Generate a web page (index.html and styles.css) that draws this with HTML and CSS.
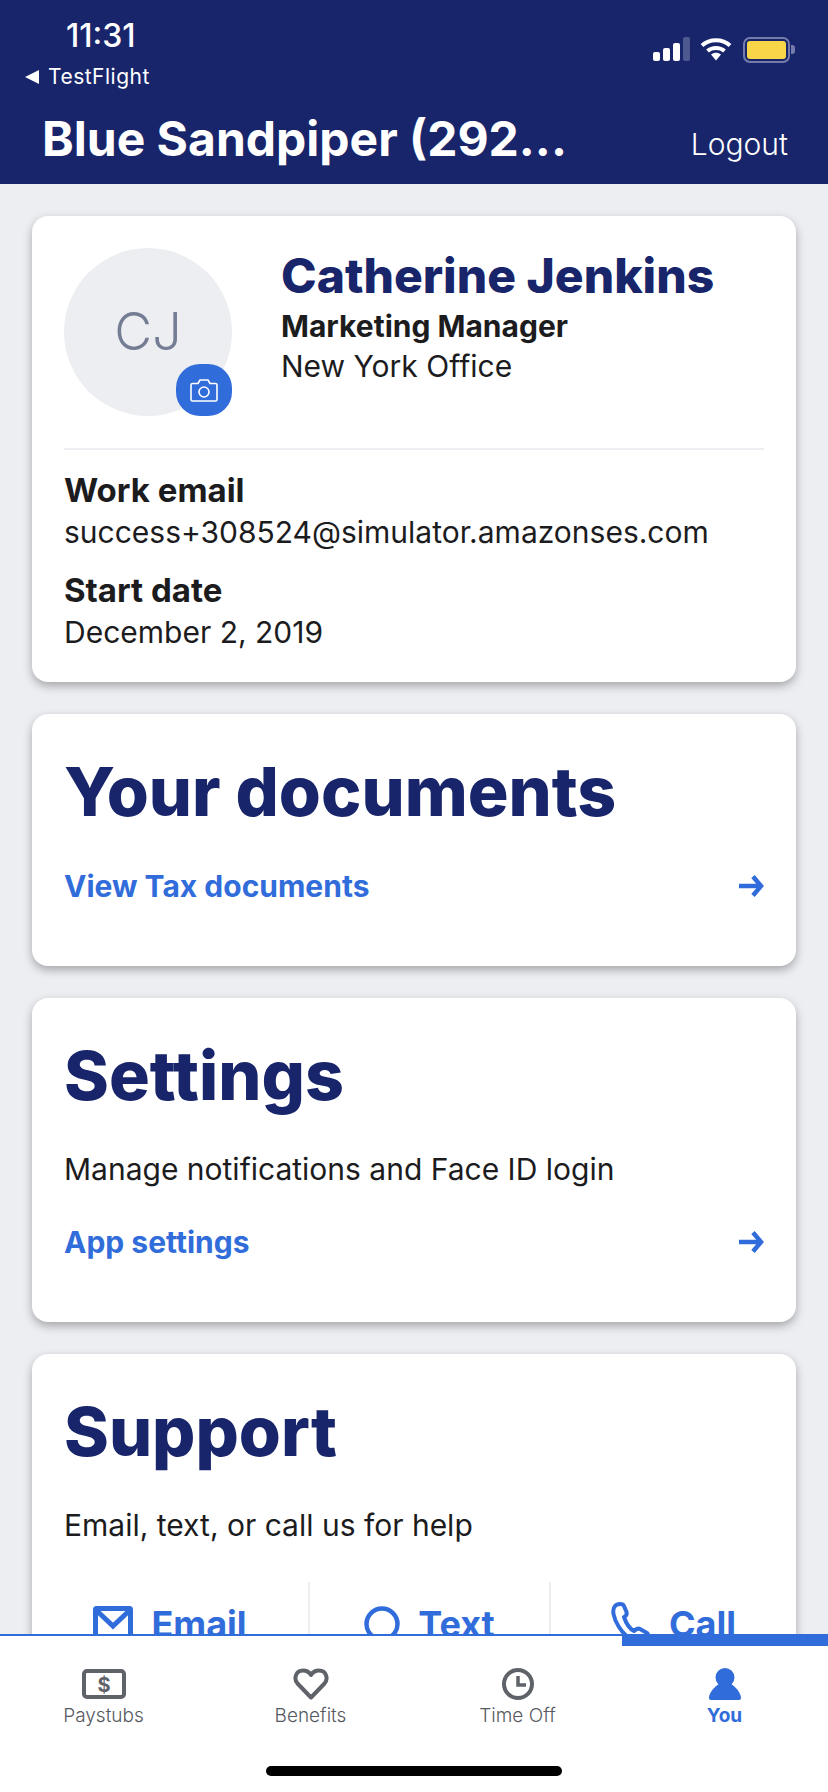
FILE: index.html
```html
<!DOCTYPE html>
<html lang="en">
<head>
    <meta charset="UTF-8">
    <meta name="viewport" content="width=device-width, initial-scale=1.0">
    <title>Blue Sandpiper</title>
    <link rel="stylesheet" href="styles.css">
</head>
<body>
    <div class="screen">
        <!-- Status bar and title -->
        <div class="header">
            <div class="status-row">
                <div class="status-left">
                    <div class="time">11:31</div>
                    <div class="back-app"><span class="back-arrow"></span>TestFlight</div>
                </div>
                <div class="status-icons">
                    <div class="signal">
                        <span class="bar bar-1"></span>
                        <span class="bar bar-2"></span>
                        <span class="bar bar-3"></span>
                        <span class="bar bar-4"></span>
                    </div>
                    <svg class="wifi" width="32" height="24" viewBox="0 0 32 24" fill="none" stroke="#fff" stroke-width="4">
                        <path d="M2 8.500C9.500 1.500 22.500 1.500 30 8.500"/>
                        <path d="M7.500 14C12 10 20 10 24.500 14"/>
                        <path d="M11 17.500L16 23.500L21 17.500C18 15 14 15 11 17.500Z" fill="#fff" stroke="none"/>
                    </svg>
                    <div class="battery"><div class="battery-fill"></div></div>
                    <div class="battery-nub"></div>
                </div>
            </div>
            <div class="title-row">
                <h1>Blue Sandpiper (292...</h1>
                <span class="logout">Logout</span>
            </div>
        </div>

        <div class="content">
            <!-- Profile -->
            <div class="card profile-card">
                <div class="profile-top">
                    <div class="avatar">
                        CJ
                        <div class="camera-badge">
                            <svg width="28" height="24" viewBox="0 0 28 24" fill="none" stroke="#fff" stroke-width="1.600" stroke-linejoin="round">
                                <path d="M2.500 5.500H8L10 2H18L20 5.500H25.500C26.300 5.500 27 6.200 27 7V21.500C27 22.300 26.300 23 25.500 23H2.500C1.700 23 1 22.300 1 21.500V7C1 6.200 1.700 5.500 2.500 5.500Z"/>
                                <circle cx="14" cy="14" r="5"/>
                            </svg>
                        </div>
                    </div>
                    <div class="profile-info">
                        <div class="profile-name">Catherine Jenkins</div>
                        <div class="profile-role">Marketing Manager</div>
                        <div class="profile-office">New York Office</div>
                    </div>
                </div>
                <div class="profile-details">
                    <div class="detail-label">Work email</div>
                    <div class="detail-value">success+308524@simulator.amazonses.com</div>
                    <div class="detail-label detail-gap">Start date</div>
                    <div class="detail-value">December 2, 2019</div>
                </div>
            </div>

            <!-- Documents -->
            <div class="card documents-card">
                <h2>Your documents</h2>
                <div class="link-row">
                    <span>View Tax documents</span>
                    <svg width="26" height="22" viewBox="0 0 26 22" fill="none" stroke="#316cdb" stroke-width="4.500">
                        <path d="M1 11H23"/>
                        <path d="M15 1.500L23 11L15 20.500"/>
                    </svg>
                </div>
            </div>

            <!-- Settings -->
            <div class="card settings-card">
                <h2>Settings</h2>
                <p class="card-text">Manage notifications and Face ID login</p>
                <div class="link-row">
                    <span>App settings</span>
                    <svg width="26" height="22" viewBox="0 0 26 22" fill="none" stroke="#316cdb" stroke-width="4.500">
                        <path d="M1 11H23"/>
                        <path d="M15 1.500L23 11L15 20.500"/>
                    </svg>
                </div>
            </div>

            <!-- Support -->
            <div class="card support-card">
                <h2>Support</h2>
                <p class="card-text">Email, text, or call us for help</p>
                <div class="contact-row">
                    <div class="contact">
                        <svg width="40" height="36" viewBox="0 0 40 36" fill="none" stroke="#316cdb" stroke-width="5">
                            <rect x="2.500" y="2.500" width="35" height="31" rx="1"/>
                            <path d="M3 4L20 20L37 4"/>
                        </svg>
                        Email
                    </div>
                    <div class="contact">
                        <svg width="36" height="44" viewBox="0 0 36 44" fill="none" stroke="#316cdb" stroke-width="4.500">
                            <circle cx="18" cy="22" r="15.500"/>
                        </svg>
                        Text
                    </div>
                    <div class="contact">
                        <svg width="40" height="44" viewBox="0 0 40 44" fill="none" stroke="#316cdb" stroke-width="4" stroke-linejoin="round">
                            <path d="M9 2C4 2 1.500 6 2.500 12C4 20 10 30 18 36C22 39 30 40 36 39C38 37 38 33 36 31L29 27C27 26 25 27 23 29C19 27 15 21 13 15C15 14 16 12 15.500 10L13 4C12.500 2.500 11 2 9 2Z"/>
                        </svg>
                        Call
                    </div>
                </div>
            </div>
        </div>

        <!-- Bottom navigation -->
        <div class="tabbar">
            <div class="tabs">
                <div class="tab">
                    <svg width="44" height="32" viewBox="0 0 44 32" fill="none" stroke="#5f6268" stroke-width="4">
                        <rect x="2" y="3" width="40" height="26" rx="3"/>
                        <text x="22" y="23.500" text-anchor="middle" class="dollar">$</text>
                    </svg>
                    <span>Paystubs</span>
                </div>
                <div class="tab">
                    <svg width="36" height="32" viewBox="0 0 36 32" fill="none" stroke="#5f6268" stroke-width="4" stroke-linejoin="round">
                        <path d="M18 29.500L4.500 15.500C0.500 11 2.500 2.500 10 2.500C13.500 2.500 16.500 4.500 18 7C19.500 4.500 22.500 2.500 26 2.500C33.500 2.500 35.500 11 31.500 15.500Z"/>
                    </svg>
                    <span>Benefits</span>
                </div>
                <div class="tab">
                    <svg width="32" height="32" viewBox="0 0 32 32" fill="none" stroke="#5f6268" stroke-width="4">
                        <circle cx="16" cy="16" r="14"/>
                        <path d="M16 8V17H24" stroke-width="3.500"/>
                    </svg>
                    <span>Time Off</span>
                </div>
                <div class="tab active">
                    <svg width="32" height="32" viewBox="0 0 32 32" fill="#316cdb">
                        <circle cx="16" cy="9.500" r="9.500"/>
                        <path d="M10 16C5 19 0 25 0 30C0 31.200 0.800 32 2 32H30C31.200 32 32 31.200 32 30C32 25 27 19 22 16C18 19 14 19 10 16Z"/>
                    </svg>
                    <span>You</span>
                </div>
            </div>
            <div class="home-indicator"></div>
        </div>
    </div>
</body>
</html>
```

FILE: styles.css
```css
* {
    margin: 0;
    padding: 0;
    box-sizing: border-box;
}

body {
    font-family: 'Inter', 'Liberation Sans', sans-serif;
    background: #edeef2;
    color: #1c1c1e;
}

.screen {
    width: 828px;
    height: 1792px;
    display: flex;
    flex-direction: column;
    overflow: hidden;
}

/* Header */
.header {
    height: 184px;
    flex-shrink: 0;
    background: #18256b;
    color: white;
    padding: 0 38px 0 25px;
}

.status-row {
    display: flex;
    justify-content: space-between;
    height: 100px;
}

.status-left {
    padding-top: 18px;
}

.time {
    font-size: 32px;
    font-weight: 500;
    line-height: 36px;
    margin-left: 41px;
}

.back-app {
    display: flex;
    align-items: center;
    font-size: 21px;
    line-height: 24px;
    margin-top: 11px;
    letter-spacing: 0.5px;
}

.back-arrow {
    width: 0;
    height: 0;
    border-top: 7px solid transparent;
    border-bottom: 7px solid transparent;
    border-right: 14px solid white;
    margin-right: 9px;
}

.status-icons {
    display: flex;
    align-items: flex-start;
    padding-top: 37px;
    margin-right: -5px;
}

.signal {
    display: flex;
    align-items: flex-end;
    gap: 3px;
    height: 24px;
    margin-right: 10px;
}

.bar {
    width: 7px;
    background: white;
    border-radius: 2px;
}

.bar-1 { height: 9px; }
.bar-2 { height: 13px; }
.bar-3 { height: 18px; }
.bar-4 { height: 24px; background: #4d5790; }

.wifi {
    margin-right: 11px;
}

.battery {
    width: 47px;
    height: 26px;
    border: 2px solid #757cab;
    border-radius: 7px;
    padding: 2px;
}

.battery-fill {
    height: 100%;
    background: #f9d648;
    border-radius: 3px;
}

.battery-nub {
    width: 4px;
    height: 9px;
    margin-top: 8px;
    margin-left: 1px;
    background: #757cab;
    border-radius: 0 3px 3px 0;
}

.title-row {
    display: flex;
    justify-content: space-between;
    align-items: center;
    padding-left: 17px;
    height: 70px;
}

.title-row h1 {
    font-size: 48px;
    line-height: 60px;
    font-weight: 700;
    margin-top: 8px;
}

.logout {
    font-size: 30px;
    font-weight: 300;
    margin-right: 2px;
    margin-top: 18px;
}

/* Cards */
.content {
    flex: 1;
    min-height: 0;
    overflow: hidden;
    padding: 32px 32px 0;
}

.card {
    background: white;
    border-radius: 16px;
    box-shadow: 0 4px 10px rgba(0, 0, 0, 0.3);
    padding: 32px;
    margin-bottom: 32px;
}

.card h2 {
    font-size: 68px;
    line-height: 84px;
    color: #18256b;
    font-weight: 800;
    margin-top: 3px;
}

.card-text {
    font-size: 30px;
    line-height: 40px;
    margin-top: 32px;
}

.link-row {
    display: flex;
    justify-content: space-between;
    align-items: center;
    margin-top: 33px;
    font-size: 30px;
    line-height: 40px;
    font-weight: 700;
    color: #316cdb;
}

.profile-card {
    height: 466px;
}

.profile-top {
    display: flex;
    gap: 49px;
    height: 202px;
    border-bottom: 2px solid #edeef2;
}

.avatar {
    position: relative;
    width: 168px;
    height: 168px;
    flex-shrink: 0;
    border-radius: 50%;
    background: #edeef2;
    color: #747d94;
    font-size: 52px;
    font-weight: 300;
    line-height: 168px;
    text-align: center;
}

.camera-badge {
    position: absolute;
    right: 0;
    bottom: 0;
    width: 56px;
    height: 52px;
    border-radius: 24px;
    background: #316cdb;
    display: flex;
    align-items: center;
    justify-content: center;
}

.profile-name {
    font-size: 48px;
    line-height: 56px;
    font-weight: 800;
    color: #18256b;
}

.profile-role {
    font-size: 30px;
    line-height: 40px;
    font-weight: 700;
    margin-top: 2px;
}

.profile-office {
    font-size: 30px;
    line-height: 40px;
}

.profile-details {
    padding-top: 19px;
}

.detail-label {
    font-size: 33px;
    line-height: 42px;
    font-weight: 700;
}

.detail-gap {
    margin-top: 16px;
}

.detail-value {
    font-size: 30px;
    line-height: 42px;
}

.documents-card {
    height: 252px;
}

.settings-card {
    height: 324px;
}

/* Contact options are cut off by the tab bar */
.contact-row {
    display: grid;
    grid-template-columns: 276px 241px 1fr;
    margin: 37px -32px 0;
}

.contact {
    display: flex;
    align-items: center;
    justify-content: center;
    gap: 18px;
    height: 84px;
    font-size: 36px;
    font-weight: 700;
    color: #316cdb;
    border-left: 2px solid #edeef2;
}

.contact:first-child {
    border-left: none;
}

/* Bottom navigation */
.tabbar {
    height: 158px;
    flex-shrink: 0;
    background: white;
    border-top: 2px solid #316cdb;
    position: relative;
    z-index: 1;
}

.tabs {
    display: grid;
    grid-template-columns: repeat(4, 1fr);
    padding-top: 32px;
}

.tab {
    display: flex;
    flex-direction: column;
    align-items: center;
    font-size: 19px;
    font-weight: 300;
    line-height: 24px;
    color: #56595f;
    gap: 4px;
}

.tab.active {
    color: #316cdb;
    font-weight: 700;
}

.tab.active::before {
    content: '';
    position: absolute;
    top: 0;
    right: 0;
    width: 206px;
    height: 10px;
    background: #316cdb;
}

.dollar {
    font-size: 20px;
    font-weight: 700;
    fill: #5f6268;
    stroke: none;
}

.home-indicator {
    width: 296px;
    height: 10px;
    margin: 38px auto 0;
    background: black;
    border-radius: 5px;
}
```
